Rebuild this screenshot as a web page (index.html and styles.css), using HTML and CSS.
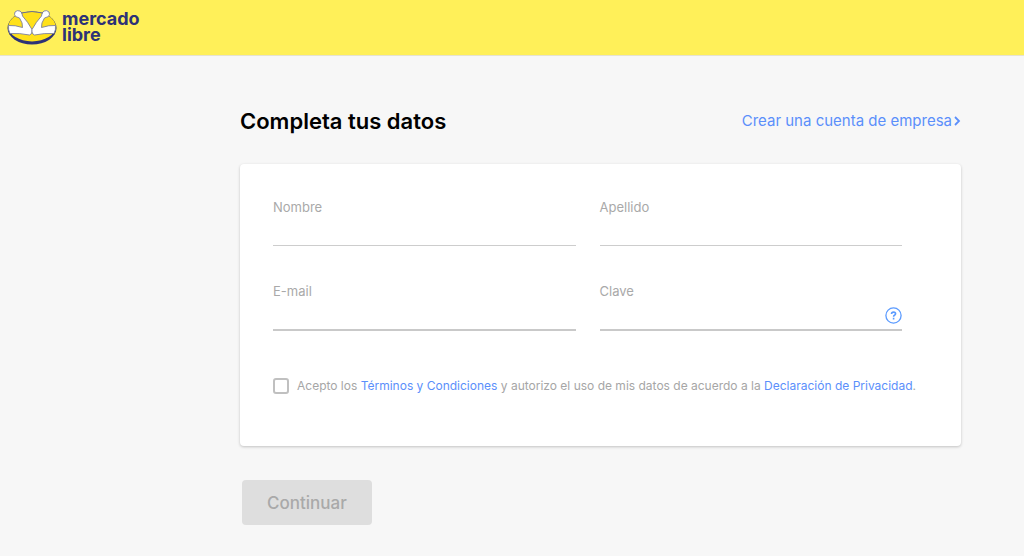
FILE: index.html
```html
<!DOCTYPE html>
<html lang="es">
<head>
<meta charset="utf-8">
<meta name="viewport" content="width=device-width, initial-scale=1">
<title>Completa tus datos</title>
<link rel="stylesheet" href="styles.css">
</head>
<body>
<header class="header">
  <a class="brand" href="#" aria-label="mercado libre">
    <svg class="brand-logo" viewBox="0 0 50 36" aria-hidden="true">
      <ellipse cx="25" cy="19" rx="24.500" ry="16.500" fill="#2d3277"/>
      <ellipse cx="25" cy="17.500" rx="23.600" ry="15" fill="#ffe11a"/>
      <g fill="#fff" stroke="#7c7f9c" stroke-width=".9" stroke-linejoin="round">
        <path d="M1.500 16.500Q8 16 15.500 18.500Q16 14 12.500 9L8.500 7.500Q6.800 5.500 8 3Q10 .800 13 2Q15.500 3.500 15.500 7Q21 13 25 20.500V23Q24.500 25.500 22.500 26Q13 24 3 24.500Q1 21 1.500 16.500Z"/>
        <path d="M48.500 16.500Q42 16 34.500 18.500Q34 14 37.500 9L41.500 7.500Q43.200 5.500 42 3Q40 .800 37 2Q34.500 3.500 34.500 7Q29 13 25 20.500V23Q25.500 25.500 27.500 26Q37 24 47 24.500Q49 21 48.500 16.500Z"/>
      </g>
      <path d="M14 4Q25 1 36 4" fill="none" stroke="#6d7090" stroke-width="1"/>
    </svg>
    <span class="brand-name">mercado<br>libre</span>
  </a>
</header>
<main class="page">
  <div class="page-head">
    <h1 class="title">Completa tus datos</h1>
    <a class="company-link" href="#">Crear una cuenta de empresa<svg class="chevron" viewBox="0 0 8 10" aria-hidden="true"><path d="M2 1L6 5L2 9" fill="none" stroke="currentColor" stroke-width="1.800"/></svg></a>
  </div>
  <form class="form">
    <div class="card">
      <div class="fields">
        <div class="field">
          <label class="label" for="nombre">Nombre</label>
          <input class="input" id="nombre" type="text">
        </div>
        <div class="field">
          <label class="label" for="apellido">Apellido</label>
          <input class="input" id="apellido" type="text">
        </div>
        <div class="field">
          <label class="label" for="email">E-mail</label>
          <input class="input input-strong" id="email" type="email">
        </div>
        <div class="field">
          <label class="label" for="clave">Clave</label>
          <div class="input-row input-strong">
            <input class="input-bare" id="clave" type="password">
            <button class="help" type="button" aria-label="Ayuda">
              <svg class="help-icon" viewBox="0 0 17 17" aria-hidden="true"><circle cx="8.500" cy="8.500" r="7.600" fill="none" stroke="currentColor" stroke-width="1.300"/><path d="M6.500 7Q6.500 5.100 8.600 5.100Q10.600 5.100 10.600 6.800Q10.600 7.700 9.500 8.200Q8.600 8.600 8.600 9.700M8.600 10.800V12.400" fill="none" stroke="currentColor" stroke-width="1.600"/></svg>
            </button>
          </div>
        </div>
      </div>
      <div class="consent">
        <input class="checkbox" id="acepto" type="checkbox">
        <label class="consent-text" for="acepto">Acepto los <a class="link" href="#">Términos y Condiciones</a> y autorizo el uso de mis datos de acuerdo a la <a class="link" href="#">Declaración de Privacidad</a>.</label>
      </div>
    </div>
    <button class="submit" type="submit" disabled>Continuar</button>
  </form>
</main>
</body>
</html>
```
FILE: styles.css
```css
* {
  box-sizing: border-box;
}

body {
  margin: 0;
  min-height: 100vh;
  background: #f7f7f7;
  color: #000;
  font-family: Inter, "Liberation Sans", sans-serif;
}

a {
  color: #5b8ffb;
  text-decoration: none;
}

.header {
  padding: 9px 7px 10px;
  background: #fff059;
  border-bottom: 1px solid #e6e3cf;
}

.brand {
  display: flex;
  align-items: center;
  gap: 5px;
  width: max-content;
}

.brand-logo {
  width: 50px;
  height: 36px;
}

.brand-name {
  color: #2d3277;
  font-size: 18px;
  font-weight: 700;
  line-height: 16px;
}

.page {
  padding: 49px 63px 30px 240px;
}

.page-head {
  display: flex;
  align-items: center;
  justify-content: space-between;
  margin-bottom: 27px;
}

.title {
  margin: 0;
  font-size: 22px;
  font-weight: 600;
  line-height: 32px;
}

.company-link {
  display: flex;
  align-items: center;
  font-size: 15px;
  line-height: 20px;
}

.chevron {
  width: 8px;
  height: 10px;
  margin-left: 1px;
}

.card {
  padding: 32px 32px 50px 33px;
  background: #fff;
  border-radius: 4px;
  box-shadow: 0 1px 3px rgba(0, 0, 0, 0.22);
}

.fields {
  display: grid;
  grid-template-columns: 1fr 1fr;
  gap: 34px 24px;
  padding-right: 27px;
}

.field {
  display: flex;
  flex-direction: column;
}

.label {
  color: #a9a9a9;
  font-size: 13px;
  line-height: 22px;
}

.input,
.input-bare {
  width: 100%;
  height: 28px;
  padding: 0;
  border: 0;
  background: transparent;
  color: #333;
  font: inherit;
  outline: 0;
}

.input {
  border-bottom: 1px solid #cdcdcd;
}

.input-row {
  display: flex;
  align-items: center;
}

.input-strong {
  height: 29px;
  border-bottom: 2px solid #c9c9c9;
}

.input-bare {
  flex: 1;
}

.help {
  display: flex;
  padding: 0;
  border: 0;
  background: none;
  color: #5b9bff;
}

.help-icon {
  width: 17px;
  height: 17px;
}

.consent {
  display: flex;
  align-items: center;
  gap: 8px;
  margin-top: 45px;
}

.checkbox {
  flex: none;
  appearance: none;
  width: 16px;
  height: 16px;
  margin: 0;
  border: 2px solid #c0c0c0;
  border-radius: 3px;
  background: #fff;
}

.checkbox:checked {
  background: #5b8ffb;
}

.consent-text {
  color: #a6a6a6;
  font-size: 12px;
  line-height: 20px;
}

.submit {
  margin: 34px 0 0 2px;
  padding: 12px 25px 10px;
  border: 0;
  border-radius: 4px;
  background: #dedede;
  color: #a9a9a9;
  font: 500 17px/23px Inter, "Liberation Sans", sans-serif;
}
```
